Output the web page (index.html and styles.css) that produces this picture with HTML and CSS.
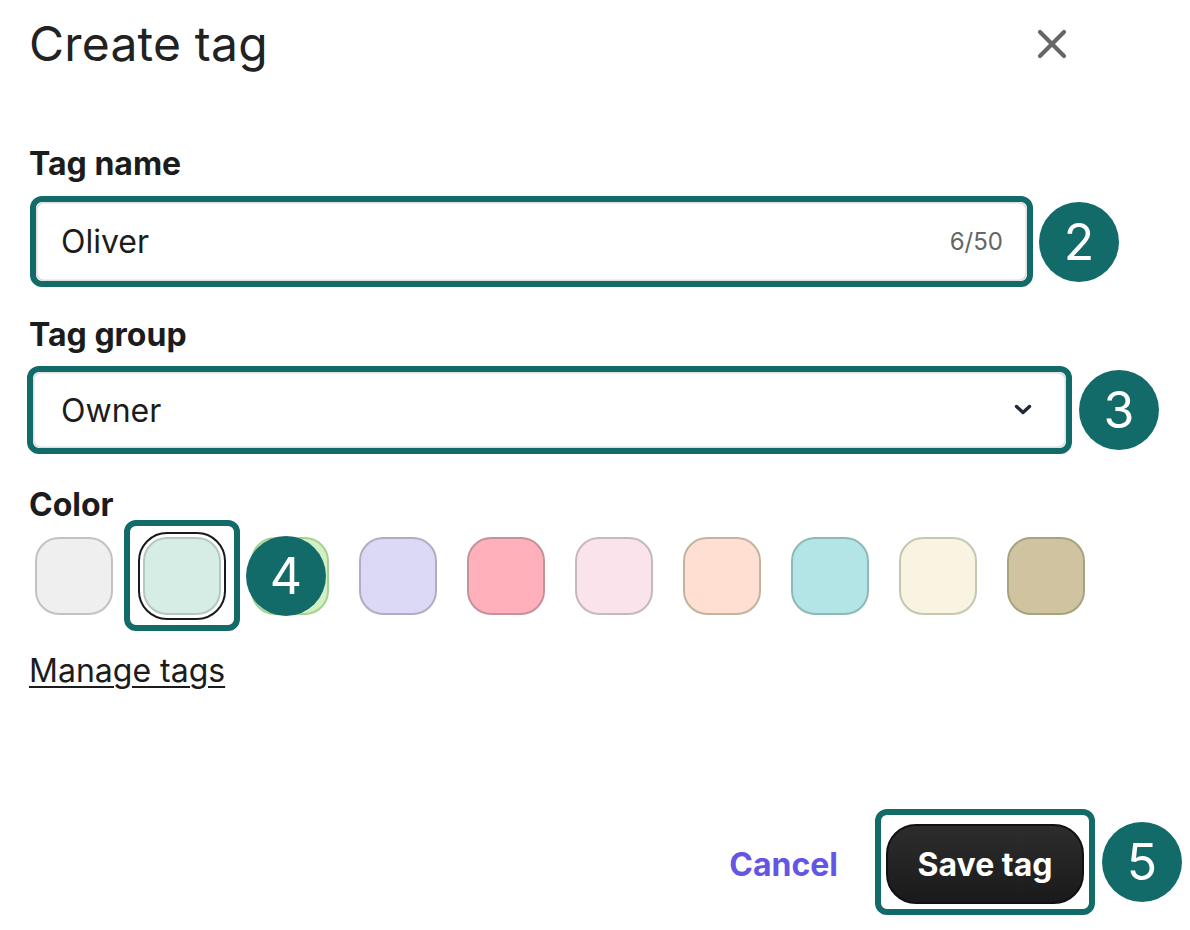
FILE: index.html
```html
<!DOCTYPE html>
<html lang="en">
<head>
<meta charset="utf-8">
<title>Create tag</title>
<link rel="stylesheet" href="styles.css">
</head>
<body>
<div class="page">
  <header class="header">
    <h1 class="title">Create tag</h1>
    <button class="close" aria-label="Close">
      <svg width="30" height="30" viewBox="0 0 30 30"><path d="M3 3 L27 27 M27 3 L3 27" stroke="#666" stroke-width="4.2" stroke-linecap="round" fill="none"/></svg>
    </button>
  </header>

  <label class="label label-name">Tag name</label>
  <div class="hl hl-input">
    <div class="field">
      <span class="field-text">Oliver</span>
      <span class="counter">6/50</span>
    </div>
    <span class="badge">2</span>
  </div>

  <label class="label label-group">Tag group</label>
  <div class="hl hl-select">
    <div class="field field-select">
      <span class="field-text">Owner</span>
      <svg class="chev" width="18" height="12" viewBox="0 0 18 12"><path d="M2.5 2.5 L9 8.5 L15.5 2.5" stroke="#1f2937" stroke-width="3.4" stroke-linecap="round" stroke-linejoin="round" fill="none"/></svg>
    </div>
    <span class="badge">3</span>
  </div>

  <label class="label label-color">Color</label>
  <div class="swatches">
    <span class="swatch s1"></span>
    <span class="swatch s2 selected">
      <span class="hl-swatch"><span class="badge">4</span></span>
    </span>
    <span class="swatch s3"></span>
    <span class="swatch s4"></span>
    <span class="swatch s5"></span>
    <span class="swatch s6"></span>
    <span class="swatch s7"></span>
    <span class="swatch s8"></span>
    <span class="swatch s9"></span>
    <span class="swatch s10"></span>
  </div>

  <a class="manage" href="#">Manage tags</a>

  <footer class="footer">
    <a class="cancel" href="#">Cancel</a>
    <div class="hl hl-save">
      <button class="save">Save tag</button>
      <span class="badge">5</span>
    </div>
  </footer>
</div>
</body>
</html>
```
FILE: styles.css
```css
* { box-sizing: border-box; }

html, body {
  margin: 0;
  background: #ffffff;
}

body {
  font-family: "Inter", "Noto Sans", "Liberation Sans", sans-serif;
  color: #1c1c1c;
}

.page {
  width: 1095px;
  padding: 16px 0 0 29px;
  display: flex;
  flex-direction: column;
  align-items: flex-start;
}

.header {
  align-self: stretch;
  display: flex;
  justify-content: space-between;
  align-items: center;
}

.title {
  margin: 0;
  font-size: 48px;
  line-height: 56px;
  font-weight: 400;
  color: #222222;
  letter-spacing: 0.2px;
}

.close {
  margin-right: 28px;
  padding: 0;
  border: 0;
  background: none;
  width: 30px;
  height: 30px;
  display: flex;
}

.label {
  font-size: 32px;
  line-height: 40px;
  font-weight: 700;
  color: #1c1c1c;
}

.label-name { margin-top: 72px; }
.label-group { margin-top: 28px; }
.label-color { margin-top: 31px; }

.hl {
  position: relative;
  border: 6px solid #136b69;
  border-radius: 12px;
}

.hl-input {
  margin-top: 12px;
  margin-left: 1px;
  width: 1003px;
  height: 91px;
}

.hl-select {
  margin-top: 11px;
  margin-left: -2px;
  width: 1045px;
  height: 88px;
}

.field {
  height: 100%;
  border-radius: 8px;
  box-shadow: inset 0 0 0 1.5px #dedede;
  display: flex;
  align-items: center;
  justify-content: space-between;
  padding: 0 24px 0 25px;
}

.field-select {
  padding: 0 34px 0 28px;
}

.field-text {
  font-size: 32px;
  color: #1c1c1c;
}

.counter {
  font-size: 24px;
  color: #666666;
}

.chev { display: block; }

.badge {
  position: absolute;
  left: calc(100% + 12px);
  top: 50%;
  transform: translateY(-50%);
  width: 80px;
  height: 80px;
  border-radius: 50%;
  background: #136b69;
  color: #ffffff;
  font-size: 50px;
  font-weight: 400;
  display: flex;
  align-items: center;
  justify-content: center;
  z-index: 2;
}

.hl-select .badge,
.hl-save .badge { left: calc(100% + 13px); }

.swatches {
  margin-top: 12px;
  margin-left: 6px;
  display: flex;
  gap: 30px;
}

.swatch {
  position: relative;
  width: 78px;
  height: 78px;
  border-radius: 24px;
  border: 2px solid #c0c0bc;
  background: #efefef;
}

.s1 { background: #efefef; border-color: #c2c2be; }
.s2 { background: #d6ede5; border-color: #b5c8bd; }
.s3 { background: #d3efc4; border-color: #a4d292; }
.s4 { background: #dcd9f6; border-color: #b0aec2; }
.s5 { background: #ffb0ba; border-color: #c39497; }
.s6 { background: #fbe3eb; border-color: #c6b8bb; }
.s7 { background: #fedfd2; border-color: #c3b4a2; }
.s8 { background: #b3e5e6; border-color: #8fb9b4; }
.s9 { background: #f9f4e2; border-color: #c7c6b1; }
.s10 { background: #d0c4a0; border-color: #a7a382; }

.selected {
  outline: 2px solid #1a1a1a;
  outline-offset: 3px;
}

.hl-swatch {
  position: absolute;
  left: -21px;
  right: -21px;
  top: -19px;
  bottom: -18px;
  border: 6px solid #136b69;
  border-radius: 12px;
}

.manage {
  margin-top: 36px;
  font-size: 32px;
  line-height: 40px;
  color: #1c1c1c;
  text-decoration: underline;
  text-decoration-thickness: 2px;
  text-underline-offset: 4px;
}

.footer {
  align-self: stretch;
  margin-top: 118px;
  display: flex;
  justify-content: flex-end;
  align-items: center;
  gap: 37px;
}

.cancel {
  font-size: 32px;
  font-weight: 700;
  color: #6356e5;
  text-decoration: none;
  margin-top: 4px;
}

.hl-save {
  width: 220px;
  height: 106px;
  padding: 9px 5px 5px 5px;
}

.save {
  width: 198px;
  height: 80px;
  border-radius: 30px;
  border: 2px solid #111111;
  background: linear-gradient(#2d2d2d, #1a1a1a);
  color: #ffffff;
  font-family: inherit;
  font-size: 32px;
  font-weight: 700;
  padding: 0;
}
```
